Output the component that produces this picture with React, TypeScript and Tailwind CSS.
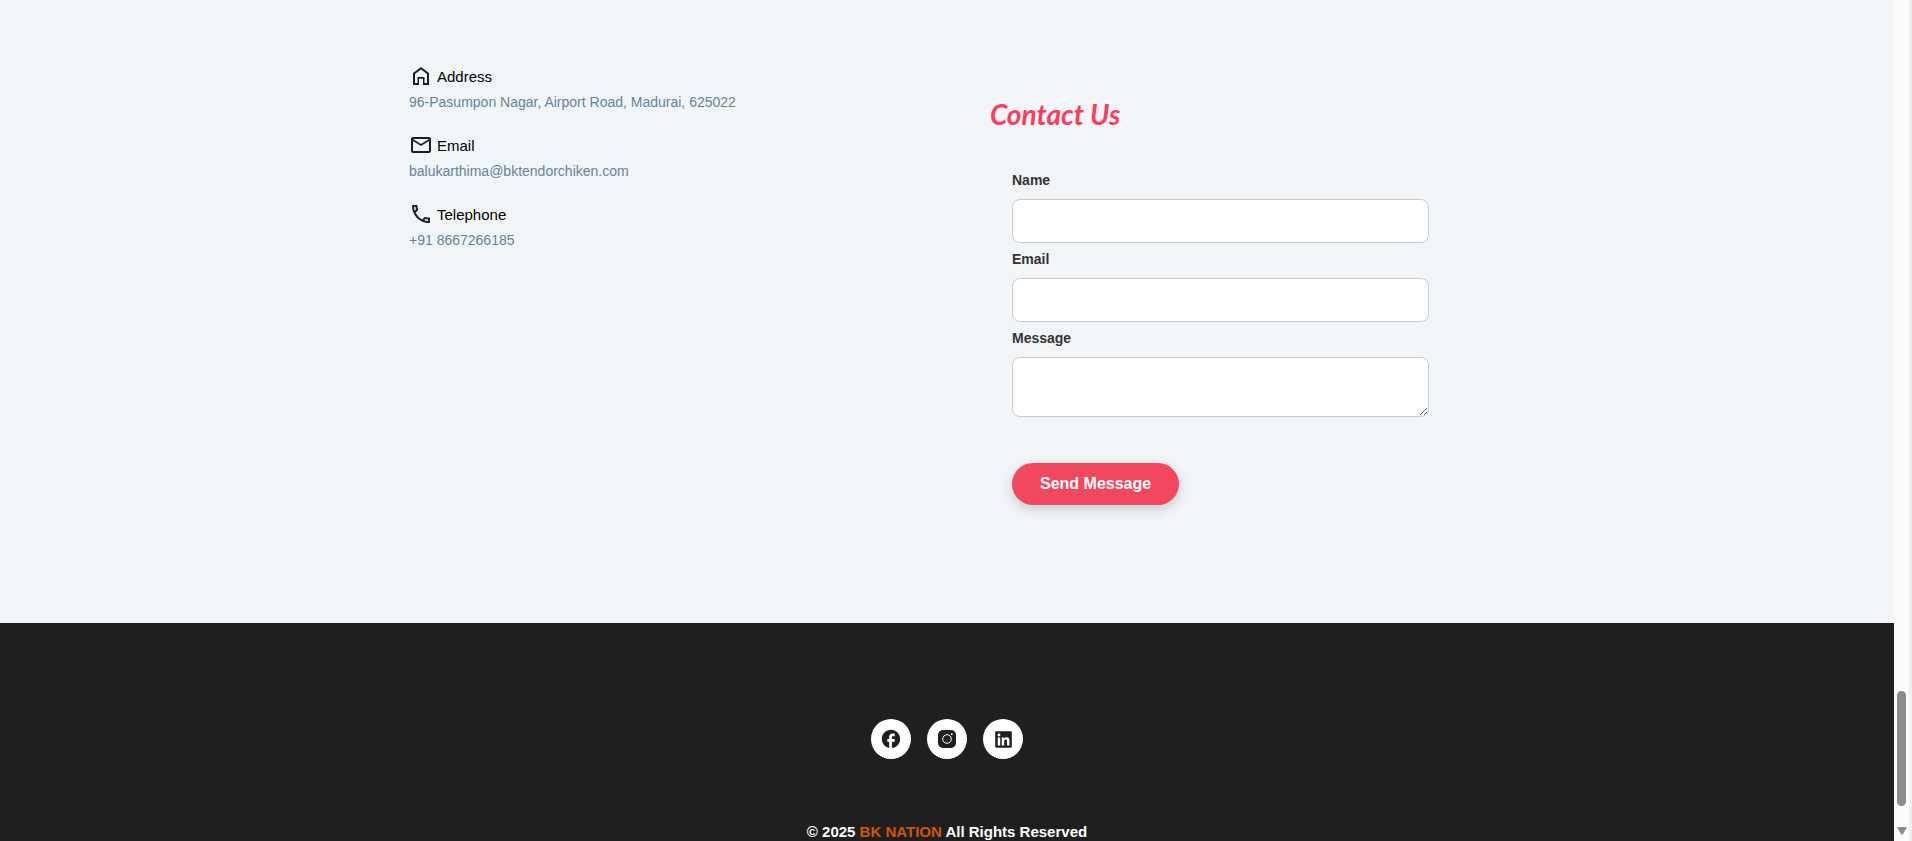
import { FaLinkedin } from "react-icons/fa";
import { MdFacebook, MdOutlineEmail, MdOutlineLocalPhone } from "react-icons/md";

function HomeIcon() {
  return (
    <svg viewBox="0 0 24 24" className="size-6" fill="currentColor" aria-hidden="true">
      <path d="M6 19h2.500v-6h7v6H18v-9l-6-4.500L6 10zm-2 2V9l8-6 8 6v12h-6v-6.300h-4V21z" />
    </svg>
  );
}

function InstagramIcon() {
  return (
    <svg viewBox="0 0 20 20" className="size-5" aria-hidden="true">
      <rect x="1" y="1" width="18" height="18" rx="5" fill="currentColor" />
      <circle cx="10" cy="10" r="4.3" fill="none" stroke="white" strokeWidth="1" />
      <circle cx="14.8" cy="5.2" r="0.9" fill="white" />
    </svg>
  );
}

const details = [
  { label: "Address", value: "96-Pasumpon Nagar, Airport Road, Madurai, 625022", icon: <HomeIcon /> },
  { label: "Email", value: "balukarthima@bktendorchiken.com", icon: <MdOutlineEmail className="size-6" /> },
  { label: "Telephone", value: "+91 8667266185", icon: <MdOutlineLocalPhone className="size-6" /> },
];

const socials = [
  { label: "Facebook", icon: <MdFacebook className="size-[22px]" /> },
  { label: "Instagram", icon: <InstagramIcon /> },
  { label: "LinkedIn", icon: <FaLinkedin className="size-[19px]" /> },
];

const labelClass = "text-sm leading-5 font-bold text-[#333333]";
const fieldClass = "mt-[9px] mb-1.5 block w-full rounded-lg border border-[#cccccc] bg-white px-3 text-base outline-none";

export default function App() {
  return (
    <div className="flex h-screen overflow-hidden bg-[#fcfcfc] font-['Liberation_Sans',Arial,sans-serif]">
      <div className="flex min-w-0 flex-1 flex-col">
        <main className="bg-[#f1f5f8] px-4 pb-[118px]">
          <div className="mx-auto grid w-full max-w-[1076px] grid-cols-[minmax(0,581px)_minmax(0,1fr)] pt-16">
            <section className="flex flex-col gap-[21px]">
              {details.map((d) => (
                <div key={d.label}>
                  <h3 className="flex items-center gap-1 pb-1 text-[15px] leading-6 text-black">
                    <span className="text-[#1f1f1f]">{d.icon}</span>
                    <span className="pt-0.5 leading-[22px]">{d.label}</span>
                  </h3>
                  <p className="text-sm leading-5 text-[#6583a0]">{d.value}</p>
                </div>
              ))}
            </section>
            <section className="pt-8">
              <h2 className="font-['Satisfy','Lato',cursive] text-[28px] leading-9 font-bold text-[#ff3b5c] italic">Contact Us</h2>
              <form className="mt-[38px] flex flex-col items-start pr-14 pl-[22px]" onSubmit={(e) => e.preventDefault()}>
                <label htmlFor="name" className={labelClass}>Name</label>
                <input id="name" type="text" className={`${fieldClass} h-11`} />
                <label htmlFor="email" className={labelClass}>Email</label>
                <input id="email" type="email" className={`${fieldClass} h-11`} />
                <label htmlFor="message" className={labelClass}>Message</label>
                <textarea id="message" className={`${fieldClass} h-[60px] resize py-2`} />
                <button type="submit" className="mt-10 h-[42px] rounded-full bg-[#f1475f] px-7 text-base font-bold text-white shadow-[0_4px_12px_rgba(0,0,0,0.18)]">
                  Send Message
                </button>
              </form>
            </section>
          </div>
        </main>
        <footer className="flex flex-1 flex-col items-center bg-[#1f1f1f] pt-24">
          <nav className="flex gap-4">
            {socials.map((s) => (
              <a key={s.label} href="#" aria-label={s.label} className="flex size-10 items-center justify-center rounded-full bg-white text-[#1f1f1f]">
                {s.icon}
              </a>
            ))}
          </nav>
          <p className="mt-[63px] text-[15px] leading-5 font-bold text-white">
            © 2025 <span className="text-[#d35400]">BK NATION</span> All Rights Reserved
          </p>
        </footer>
      </div>
      <div className="flex w-[18px] shrink-0 flex-col items-center justify-end border-r-[3px] border-[#f0f0f0] pb-1.5" aria-hidden="true">
        <div className="h-[115px] w-[9px] rounded-full bg-[#8b8b8b]" />
        <svg viewBox="0 0 10 8" className="mt-[21px] h-2 w-2.5" fill="#8b8b8b">
          <path d="M1 0h8q1 0 .5 1L6 7Q5 8.400 4 7L.5 1Q0 0 1 0z" />
        </svg>
      </div>
    </div>
  );
}
